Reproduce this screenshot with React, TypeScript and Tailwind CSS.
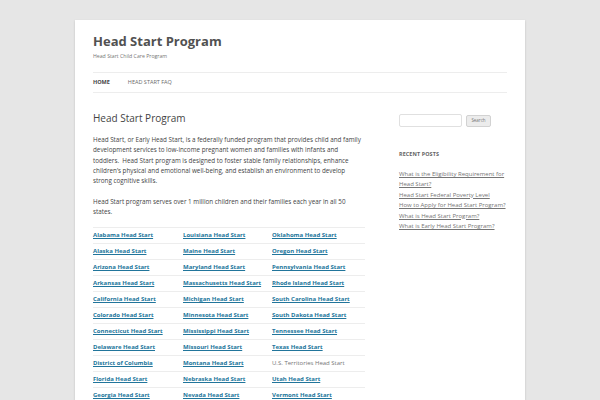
const rows: [string, string, string][] = [
  ["Alabama Head Start", "Louisiana Head Start", "Oklahoma Head Start"],
  ["Alaska Head Start", "Maine Head Start", "Oregon Head Start"],
  ["Arizona Head Start", "Maryland Head Start", "Pennsylvania Head Start"],
  ["Arkansas Head Start", "Massachusetts Head Start", "Rhode Island Head Start"],
  ["California Head Start", "Michigan Head Start", "South Carolina Head Start"],
  ["Colorado Head Start", "Minnesota Head Start", "South Dakota Head Start"],
  ["Connecticut Head Start", "Mississippi Head Start", "Tennessee Head Start"],
  ["Delaware Head Start", "Missouri Head Start", "Texas Head Start"],
  ["District of Columbia", "Montana Head Start", "U.S. Territories Head Start"],
  ["Florida Head Start", "Nebraska Head Start", "Utah Head Start"],
  ["Georgia Head Start", "Nevada Head Start", "Vermont Head Start"],
];

const recentPosts = [
  "What is the Eligibility Requirement for Head Start?",
  "Head Start Federal Poverty Level",
  "How to Apply for Head Start Program?",
  "What is Head Start Program?",
  "What is Early Head Start Program?",
];

function Cell({ label }: { label: string }) {
  // the territories entry is plain text, not a link
  if (label.startsWith("U.S.")) {
    return <span className="text-[#757575]">{label}</span>;
  }
  return (
    <a href="#" className="font-bold text-[#21759b] underline underline-offset-1">
      {label}
    </a>
  );
}

export default function App() {
  return (
    <div
      className="min-h-[400px] h-[400px] overflow-hidden bg-[#e6e6e6] pt-[20px]"
      style={{ fontFamily: '"Open Sans", "Liberation Sans", sans-serif' }}
    >
      <div className="mx-auto w-[450px] h-[380px] bg-white px-[18px] shadow-[0_1px_2px_rgba(100,100,100,0.3)]">
        {/* Site header */}
        <header className="pt-[12px]">
          <h1 className="text-[13px] leading-[18px] font-bold text-[#515151]">
            Head Start Program
          </h1>
          <p className="mt-[1px] text-[5.2px] leading-[10px] text-[#757575]">
            Head Start Child Care Program
          </p>
          <nav className="mt-[11px] h-[21px] border-y border-[#ededed] flex items-center gap-[18px] text-[5.5px] uppercase">
            <a href="#" className="font-bold text-[#444]">Home</a>
            <a href="#" className="text-[#6a6a6a]">Head Start FAQ</a>
          </nav>
        </header>

        <div className="flex gap-[34px]">
          {/* Main content */}
          <main className="w-[272px] shrink-0 text-[#444]">
            <h2 className="mt-[18px] text-[10px] leading-[14px] text-[#444]">Head Start Program</h2>
            <p className="mt-[10px] text-[6.3px] leading-[10.3px]">
              Head Start, or Early Head Start, is a federally funded program that provides child and family
              development services to low-income pregnant women and families with infants and
              toddlers.&nbsp; Head Start program is designed to foster stable family relationships, enhance
              children’s physical and emotional well-being, and establish an environment to develop
              strong cognitive skills.
            </p>
            <p className="mt-[10.3px] text-[6.3px] leading-[10.3px]">
              Head Start program serves over 1 million children and their families each year in all 50
              states.
            </p>

            <div className="mt-[10px] text-[6px]">
              {rows.map((row, i) => (
                <div
                  key={i}
                  className="grid grid-cols-[90px_89px_1fr] h-[16px] items-center border-t border-[#ededed]"
                >
                  {row.map((label) => (
                    <div key={label} className="whitespace-nowrap">
                      <Cell label={label} />
                    </div>
                  ))}
                </div>
              ))}
            </div>
          </main>

          {/* Sidebar */}
          <aside className="w-[108px] shrink-0 pt-[21px]">
            <form className="flex items-center gap-[4px]">
              <input
                type="text"
                className="w-[63px] h-[13px] border border-[#e0e0e0] rounded-[2px] bg-white"
              />
              <button
                type="button"
                className="w-[25px] h-[12px] border border-[#d2d2d2] rounded-[2px] bg-[#ececec] text-[4.5px] text-[#757575]"
              >
                Search
              </button>
            </form>

            <h3 className="mt-[23px] text-[5.4px] leading-[8px] font-bold uppercase tracking-[0.02em] text-[#636363]">
              Recent Posts
            </h3>
            <ul className="mt-[11px] text-[6px] leading-[10.4px]">
              {recentPosts.map((p) => (
                <li key={p}>
                  <a href="#" className="text-[#757575] underline underline-offset-1">{p}</a>
                </li>
              ))}
            </ul>
          </aside>
        </div>
      </div>
    </div>
  );
}
